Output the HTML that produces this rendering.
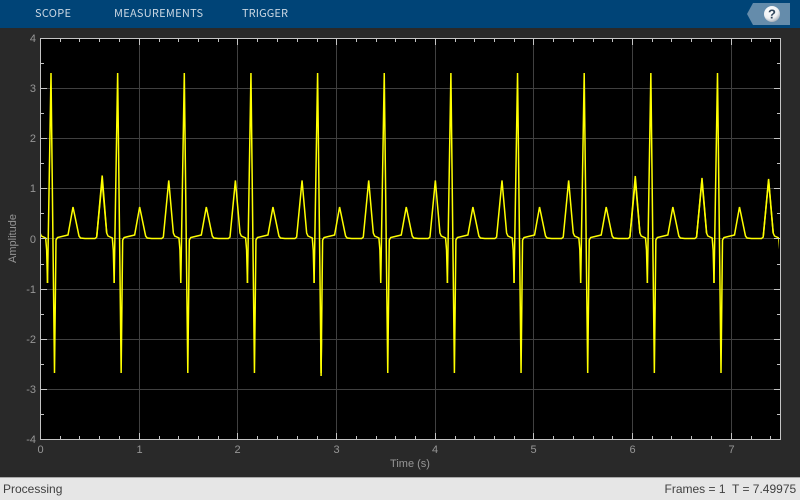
<!DOCTYPE html>
<html>
<head>
<meta charset="utf-8">
<style>
html,body{margin:0;padding:0;width:800px;height:500px;overflow:hidden;background:#292929;}
svg{display:block;position:absolute;left:0;top:0;}
</style>
</head>
<body>
<svg width="800" height="500" viewBox="0 0 800 500" xmlns="http://www.w3.org/2000/svg">
<defs>
<clipPath id="plot"><rect x="41" y="39" width="738" height="400"/></clipPath>
<polyline id="p" fill="none" stroke="#ffff00" stroke-width="1.5" stroke-linejoin="miter" points="-3.5,283 0,73 3.5,373 5,240 6.5,237.5 17,235 22,207 28,236 29.5,238 34,238.5 44,238.5 45.7,237 51.1,180.5 55.7,233 57,236 61.3,238 62.3,250 63.15,283"/>
<radialGradient id="ball" cx="0.4" cy="0.3" r="0.8"><stop offset="0" stop-color="#ffffff"/><stop offset="0.6" stop-color="#eef0f2"/><stop offset="1" stop-color="#8b98a6"/></radialGradient>
</defs>

<rect width="800" height="500" fill="#292929"/>
<rect width="800" height="28" fill="#004477"/>
<g font-family="'Noto Sans CJK SC','Liberation Sans',sans-serif" font-size="11" fill="#c9d6e2">
<text x="35" y="17" textLength="36" lengthAdjust="spacing">SCOPE</text>
<text x="114" y="17" textLength="89" lengthAdjust="spacing">MEASUREMENTS</text>
<text x="242" y="17" textLength="46" lengthAdjust="spacing">TRIGGER</text>
</g>
<polygon points="747,14 753,3 790,3 790,25 753,25" fill="#658cab"/>
<circle cx="772" cy="14" r="8" fill="url(#ball)"/>
<text x="772" y="18.5" text-anchor="middle" font-family="'Liberation Sans',sans-serif" font-weight="bold" font-size="13" fill="#33475c">?</text>

<rect x="41" y="39" width="739" height="400" fill="#000"/>
<g stroke="#404040" stroke-width="1" fill="none" shape-rendering="crispEdges">
<path d="M139.5 39V439M237.5 39V439M336.5 39V439M435.5 39V439M533.5 39V439M632.5 39V439M731.5 39V439"/>
<path d="M41 88.5H780M41 138.5H780M41 188.5H780M41 238.5H780M41 289.5H780M41 339.5H780M41 389.5H780"/>
</g>
<g clip-path="url(#plot)">
<use href="#p" x="-15.65"/>
<use href="#p" x="51"/>
<use href="#p" x="117.65"/>
<use href="#p" x="184.3"/>
<use href="#p" x="250.95"/>
<use href="#p" x="317.6"/>
<use href="#p" x="384.25"/>
<use href="#p" x="450.9"/>
<use href="#p" x="517.55"/>
<use href="#p" x="584.2"/>
<use href="#p" x="650.85"/>
<use href="#p" x="717.5"/>
<g fill="none" stroke="#ffff00" stroke-width="1.5">
<polyline points="96.7,237 102.2,175.5 106.7,233"/>
<polyline points="629.9,237 635.3,176 639.9,233"/>
<polyline points="696.6,237 702,178 706.6,233"/>
<polyline points="763.2,237 768.6,179 773.2,233"/>
<polyline points="320.7,340 321.1,376 321.5,340"/>
</g>
</g>
<g stroke="#c4c4c4" stroke-width="1" fill="none" shape-rendering="crispEdges">
<rect x="40.5" y="38.5" width="740" height="401"/>
<path d="M60.5 39v3M79.5 39v3M99.5 39v3M119.5 39v3M139.5 39v6M159.5 39v3M178.5 39v3M198.5 39v3M218.5 39v3M237.5 39v6M257.5 39v3M277.5 39v3M297.5 39v3M317.5 39v3M336.5 39v6M356.5 39v3M376.5 39v3M395.5 39v3M415.5 39v3M435.5 39v6M455.5 39v3M474.5 39v3M494.5 39v3M514.5 39v3M533.5 39v6M553.5 39v3M573.5 39v3M593.5 39v3M612.5 39v3M632.5 39v6M652.5 39v3M671.5 39v3M691.5 39v3M711.5 39v3M731.5 39v6M751.5 39v3M770.5 39v3"/>
<path d="M60.5 439v-3M79.5 439v-3M99.5 439v-3M119.5 439v-3M139.5 439v-6M159.5 439v-3M178.5 439v-3M198.5 439v-3M218.5 439v-3M237.5 439v-6M257.5 439v-3M277.5 439v-3M297.5 439v-3M317.5 439v-3M336.5 439v-6M356.5 439v-3M376.5 439v-3M395.5 439v-3M415.5 439v-3M435.5 439v-6M455.5 439v-3M474.5 439v-3M494.5 439v-3M514.5 439v-3M533.5 439v-6M553.5 439v-3M573.5 439v-3M593.5 439v-3M612.5 439v-3M632.5 439v-6M652.5 439v-3M671.5 439v-3M691.5 439v-3M711.5 439v-3M731.5 439v-6M751.5 439v-3M770.5 439v-3"/>
<path d="M41 63.5h3M41 88.5h6M41 113.5h3M41 138.5h6M41 163.5h3M41 188.5h6M41 213.5h3M41 238.5h6M41 264.5h3M41 289.5h6M41 314.5h3M41 339.5h6M41 364.5h3M41 389.5h6M41 414.5h3"/>
<path d="M780 63.5h-3M780 88.5h-6M780 113.5h-3M780 138.5h-6M780 163.5h-3M780 188.5h-6M780 213.5h-3M780 238.5h-6M780 264.5h-3M780 289.5h-6M780 314.5h-3M780 339.5h-6M780 364.5h-3M780 389.5h-6M780 414.5h-3"/>
</g>

<g font-family="'Liberation Sans',sans-serif" font-size="11" fill="#969696">
<g text-anchor="end">
<text x="36" y="42">4</text>
<text x="36" y="92">3</text>
<text x="36" y="142">2</text>
<text x="36" y="192">1</text>
<text x="36" y="243">0</text>
<text x="36" y="293">-1</text>
<text x="36" y="343">-2</text>
<text x="36" y="393">-3</text>
<text x="36" y="443">-4</text>
</g>
<g text-anchor="middle">
<text x="40.5" y="453">0</text>
<text x="139.5" y="453">1</text>
<text x="237.5" y="453">2</text>
<text x="336.5" y="453">3</text>
<text x="435" y="453">4</text>
<text x="533.5" y="453">5</text>
<text x="632.5" y="453">6</text>
<text x="731.5" y="453">7</text>
<text x="410" y="467">Time (s)</text>
<text transform="translate(16,238.5) rotate(-90)">Amplitude</text>
</g>
</g>

<rect y="477" width="800" height="23" fill="#e6e6e6"/>
<rect y="477" width="800" height="1" fill="#a8a8a8"/>
<g font-family="'Liberation Sans',sans-serif" font-size="12" fill="#404040">
<text x="3" y="493">Processing</text>
<text x="664.5" y="493">Frames = 1</text>
<text x="732" y="493">T = 7.49975</text>
</g>
</svg>
</body>
</html>
